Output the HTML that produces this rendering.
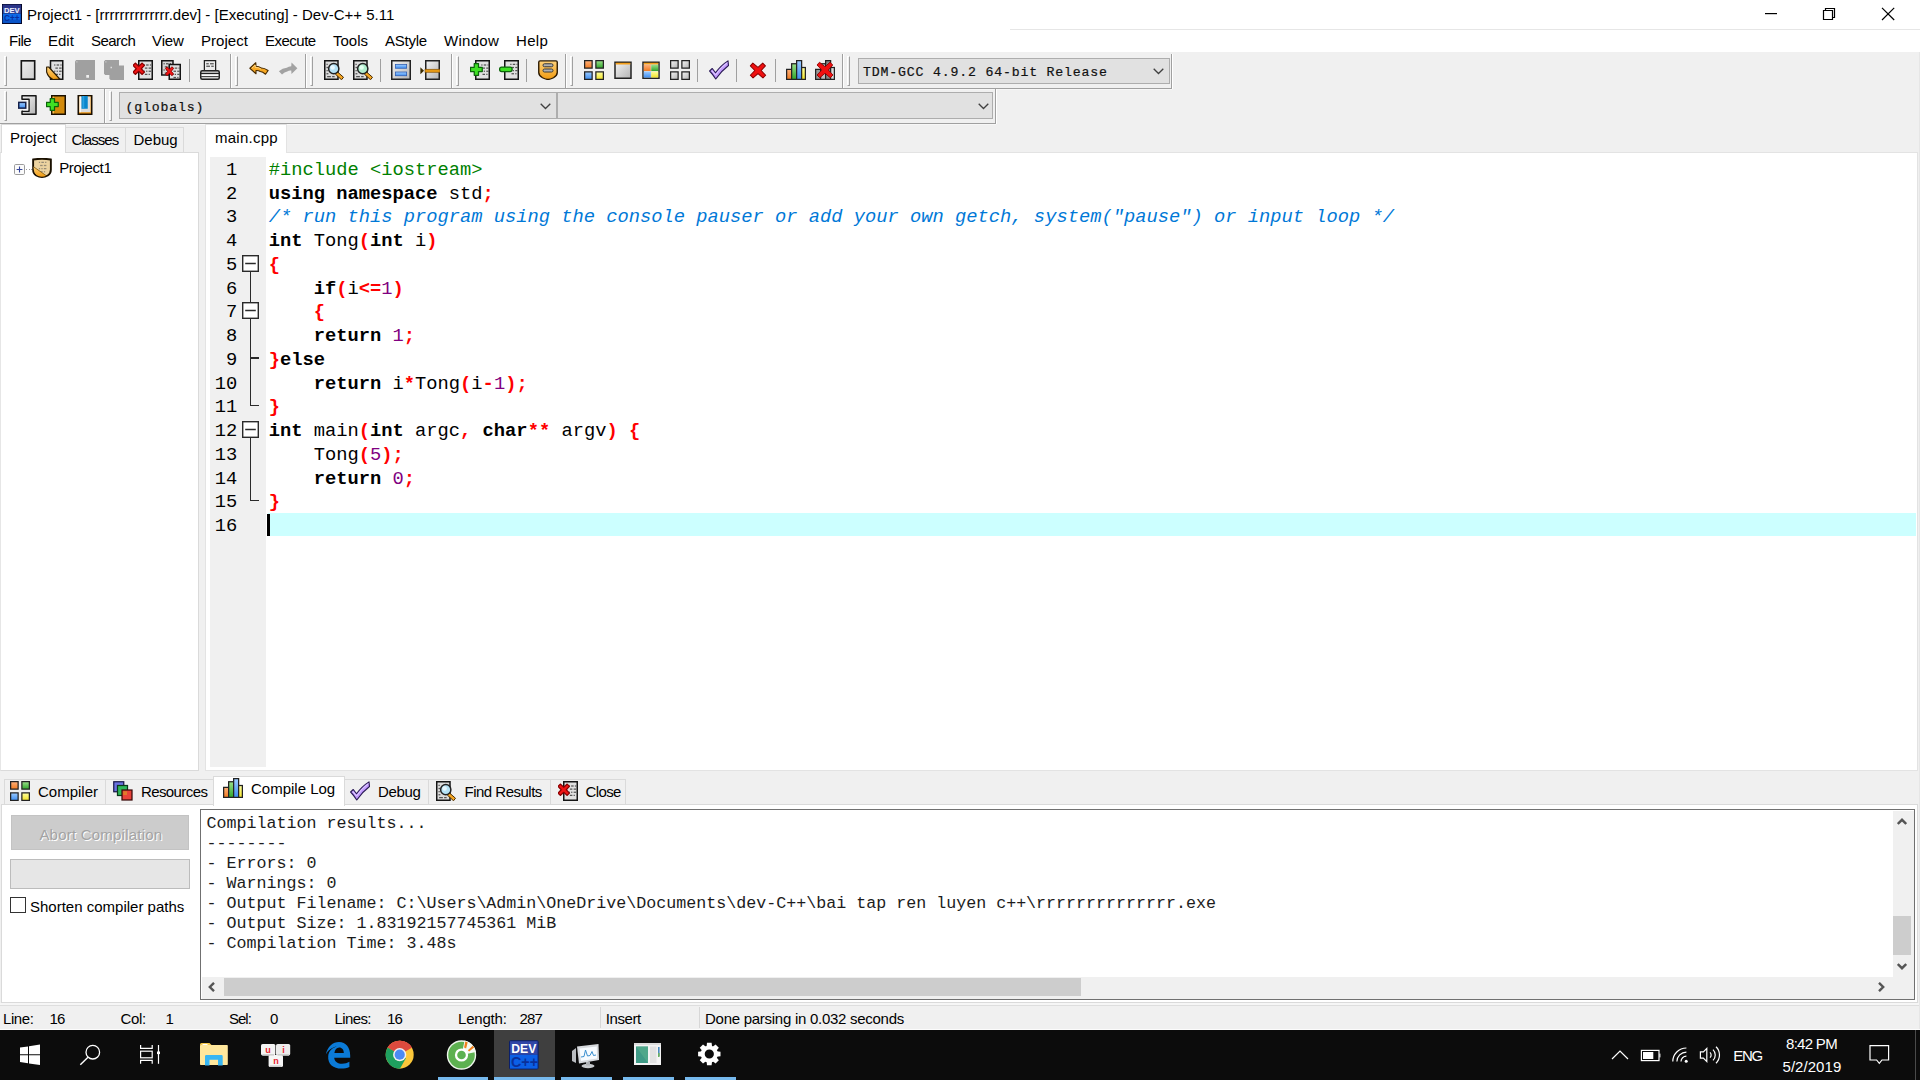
<!DOCTYPE html>
<html>
<head>
<meta charset="utf-8">
<title>Dev-C++</title>
<style>
*{box-sizing:border-box;margin:0;padding:0}
html,body{width:1920px;height:1080px;overflow:hidden;background:#f0f0f0;font-family:"Liberation Sans",sans-serif;font-size:15px;color:#000}
.abs{position:absolute}
.t{position:absolute;white-space:nowrap;line-height:1}
/* title + menu */
#title{left:0;top:0;width:1920px;height:30px;background:#fff}
#menu{left:0;top:30px;width:1920px;height:21.5px;background:#fff}
/* toolbars */
.tb{position:absolute;height:35px;border-right:1px solid #a0a0a0;border-bottom:1px solid #a0a0a0;box-shadow:1px 0 0 #fff,0 1px 0 #f7f7f7}
.grip{position:absolute;top:2px;width:3px;height:30px;border-left:1px solid #fff;border-right:1px solid #a0a0a0;border-top:1px solid #fff;border-bottom:1px solid #a0a0a0}
.sep{position:absolute;width:1.3px;height:22.5px;background:#a0a0a0}
.ic{position:absolute;width:20px;height:20px}
.combo{position:absolute;background:#e1e1e1;border:1px solid #adadad;font-family:"Liberation Mono",monospace;font-size:13.2px;letter-spacing:0.83px;color:#111;-webkit-text-stroke:0.2px #111}
/* code */
#code{font-family:"Liberation Mono",monospace;font-size:18.75px;line-height:23.75px;white-space:pre}
.ln{position:absolute;left:0;height:23.75px;white-space:pre}
.k{font-weight:bold}
.r{color:#ff0000;font-weight:bold}
.n{color:#800080}
.p{color:#008000}
.c{color:#0078d7;font-style:italic}
#log{font-family:"Liberation Mono",monospace;font-size:16.67px;line-height:20px;white-space:pre;color:#1c1c1c}
</style>
</head>
<body>
<!--ICONS1-->
<svg width="0" height="0" style="position:absolute">
<defs>
<linearGradient id="gpg" x1="0" y1="0" x2="1" y2="1"><stop offset="0" stop-color="#fbfbfb"/><stop offset="1" stop-color="#bdbdbd"/></linearGradient>
<linearGradient id="gpg2" x1="0" y1="0" x2="1" y2="1"><stop offset="0" stop-color="#ececec"/><stop offset="1" stop-color="#cfcfcf"/></linearGradient>
<linearGradient id="gor" x1="0" y1="0" x2="0" y2="1"><stop offset="0" stop-color="#ffd27a"/><stop offset="1" stop-color="#f09a10"/></linearGradient>
<linearGradient id="ggn" x1="0" y1="0" x2="0" y2="1"><stop offset="0" stop-color="#9be08a"/><stop offset="1" stop-color="#2fa52a"/></linearGradient>
<linearGradient id="gbl" x1="0" y1="0" x2="0" y2="1"><stop offset="0" stop-color="#9ccbff"/><stop offset="1" stop-color="#3f8ef0"/></linearGradient>
<linearGradient id="gyl" x1="0" y1="0" x2="0" y2="1"><stop offset="0" stop-color="#ffffa0"/><stop offset="1" stop-color="#f2e42a"/></linearGradient>
<linearGradient id="gog" x1="0" y1="0" x2="0" y2="1"><stop offset="0" stop-color="#ffb07a"/><stop offset="1" stop-color="#f07a20"/></linearGradient>
<linearGradient id="ggy" x1="0" y1="0" x2="1" y2="1"><stop offset="0" stop-color="#f4f4f4"/><stop offset="1" stop-color="#b4b4b4"/></linearGradient>
<g id="dots" fill="#555"><rect x="0" y="0" width="1" height="1"/><rect x="2" y="0" width="2" height="1"/><rect x="5" y="0" width="1" height="1"/><rect x="1" y="2.5" width="2" height="1"/><rect x="4" y="2.5" width="2" height="1"/><rect x="0" y="5" width="1" height="1"/><rect x="2" y="5" width="1" height="1"/><rect x="4" y="5" width="2" height="1"/><rect x="1" y="7.5" width="2" height="1"/><rect x="4" y="7.5" width="1" height="1"/></g>
<path id="redx" d="M1.7 0.2L4 2.3L6.3 0.2L7.8 1.7L5.7 4L7.8 6.3L6.3 7.8L4 5.7L1.7 7.8L0.2 6.3L2.3 4L0.2 1.7Z" fill="#f01414" stroke="#8a0000" stroke-width="0.8" stroke-linejoin="round"/>
<path id="gplus" d="M3.4 0.4H6.8V3.4H9.8V6.8H6.8V9.8H3.4V6.8H0.4V3.4H3.4Z" fill="#3fe024" stroke="#0b640a" stroke-width="1" stroke-linejoin="round"/>
<symbol id="i-new" viewBox="0 0 16 16"><rect x="2.65" y="0.65" width="10.7" height="14.7" fill="url(#gpg2)" stroke="#151515" stroke-width="1.3"/></symbol>
<symbol id="i-open" viewBox="0 0 16 16"><path d="M3.6 0.6H13.4V15.4H3.6Z" fill="#dedede" stroke="#151515" stroke-width="1.2"/><use href="#dots" x="6.5" y="3.5"/><path d="M0.5 5.6L2.2 5.6L11 15.2L5.6 15.6Q1.6 13.6 0.5 9.6Z" fill="url(#gor)" stroke="#2a1a00" stroke-width="0.9" stroke-linejoin="round"/></symbol>
<symbol id="i-save" viewBox="0 0 16 16"><path d="M1 0H16V16H1L0 15V1Z" fill="#a0a0a0"/><rect x="9" y="12" width="2.2" height="2.2" fill="#f0f0f0"/><rect x="1" y="1" width="1" height="1" fill="#c8c8c8"/></symbol>
<symbol id="i-saveall" viewBox="0 0 16 16"><path d="M1 0H12V4.3H16V16H5.3L4.3 15V12H1L0 11V1Z" fill="#a0a0a0"/><rect x="5.2" y="5.4" width="1.2" height="1.2" fill="#dcdcdc"/><rect x="1" y="1" width="1" height="1" fill="#c8c8c8"/></symbol>
<symbol id="i-close" viewBox="0 0 16 16"><rect x="4.6" y="0.6" width="10.8" height="14.8" fill="#e0e0e0" stroke="#151515" stroke-width="1.2"/><use href="#dots" x="8.5" y="3.5"/><g transform="translate(-0.2 2.2) scale(1.2)"><use href="#redx"/></g></symbol>
<symbol id="i-closeall" viewBox="0 0 16 16"><rect x="0.6" y="0.6" width="9" height="11.4" fill="#d4d4d4" stroke="#151515" stroke-width="1.2"/><use href="#dots" x="2" y="2.5"/><rect x="6.6" y="3.6" width="8.8" height="11.8" fill="#e0e0e0" stroke="#151515" stroke-width="1.2"/><use href="#dots" x="9" y="6"/><g transform="translate(3.4 5.2) scale(0.85 0.95)"><use href="#redx"/></g></symbol>
<symbol id="i-print" viewBox="0 0 16 16"><rect x="3.5" y="0.5" width="9" height="8" fill="#ececec" stroke="#222"/><rect x="5" y="2.5" width="2" height="1" fill="#555"/><rect x="8" y="2.5" width="3" height="1" fill="#555"/><rect x="5" y="4.5" width="3" height="1" fill="#555"/><rect x="9" y="4.5" width="2" height="1" fill="#555"/><rect x="0.6" y="8.6" width="14.8" height="6.8" rx="1.2" fill="#d0d0d0" stroke="#222" stroke-width="1.2"/><rect x="1.4" y="11.2" width="13.2" height="1.6" fill="#fafafa"/><rect x="0.6" y="10.3" width="14.8" height="1" fill="#222"/><rect x="0.6" y="12.8" width="14.8" height="0.8" fill="#444"/></symbol>
<symbol id="i-undo" viewBox="0 0 16 16"><g transform="translate(0 0.8)"><path d="M0.7 5.8L5.4 1.4L5.6 4.2Q8 4.4 9.6 5.6Q12 5.4 15.3 7.6L13.2 10.6Q11 8.6 9 8.4Q7.6 7.4 5.6 7.6L5.6 10.2Z" fill="#f7a823" stroke="#4a2c00" stroke-width="0.9" stroke-linejoin="round"/><path d="M2.2 5.8L5 3.2L5 5.2Q8 5 9.6 6.4" fill="none" stroke="#ffd98a" stroke-width="0.7"/></g></symbol>
<symbol id="i-redo" viewBox="0 0 16 16"><path transform="translate(0 0.8)" d="M15.5 5.8L10.8 1.2L10.6 4.2Q8.4 4.2 7 5.4Q3.6 5.6 0.7 8.2L3.2 10.8Q5.2 8.8 7.4 8.4Q8.8 7.4 10.6 7.6L10.8 10.4Z" fill="#a2a2a2"/></symbol>
<symbol id="i-find" viewBox="0 0 16 16"><rect x="0.6" y="0.6" width="10.6" height="14.8" fill="#dcdcdc" stroke="#151515" stroke-width="1.2"/><g fill="#555"><rect x="2" y="3" width="1" height="1"/><rect x="2" y="5.5" width="1.5" height="1"/><rect x="2" y="8" width="1" height="1"/><rect x="2" y="10.5" width="1.5" height="1"/><rect x="2.5" y="12.8" width="3" height="1"/><rect x="6.5" y="12.8" width="2" height="1"/></g><path d="M10.6 9.4L15.6 13.8L14 15.8L9 11.2Z" fill="#f5a623" stroke="#4a2c00" stroke-width="0.8" stroke-linejoin="round"/><circle cx="7.8" cy="6.9" r="4.1" fill="#b4e2f6" stroke="#222" stroke-width="1.2"/><circle cx="6.9" cy="6" r="1.8" fill="#e8f8ff"/></symbol>
<symbol id="i-replace" viewBox="0 0 16 16"><rect x="0.6" y="0.6" width="10.6" height="14.8" fill="#dcdcdc" stroke="#151515" stroke-width="1.2"/><g fill="#555"><rect x="2" y="3" width="1" height="1"/><rect x="2" y="5.5" width="1.5" height="1"/><rect x="2" y="8" width="1" height="1"/><rect x="2" y="10.5" width="1.5" height="1"/><rect x="2.5" y="12.8" width="3" height="1"/><rect x="6.5" y="12.8" width="2" height="1"/></g><path d="M10.6 9.4L15.6 13.8L14 15.8L9 11.2Z" fill="#f5a623" stroke="#4a2c00" stroke-width="0.8" stroke-linejoin="round"/><circle cx="7.8" cy="6.9" r="4.1" fill="#aeeccc" stroke="#222" stroke-width="1.2"/><circle cx="6.9" cy="6" r="1.8" fill="#e2fff0"/></symbol>
<symbol id="i-gotofunc" viewBox="0 0 16 16"><rect x="0.6" y="0.6" width="14.8" height="14.8" fill="url(#ggy)" stroke="#222" stroke-width="1.2"/><rect x="3.5" y="3.6" width="9" height="3" fill="url(#gbl)" stroke="#2a5ab0" stroke-width="0.6"/><rect x="3.5" y="9.6" width="9" height="3" fill="url(#gbl)" stroke="#2a5ab0" stroke-width="0.6"/></symbol>
<symbol id="i-gotoline" viewBox="0 0 16 16"><rect x="4.6" y="0.6" width="10.8" height="14.8" fill="url(#ggy)" stroke="#222" stroke-width="1.2"/><rect x="4" y="7.4" width="12" height="2.4" fill="#e79a14" stroke="#7a4a00" stroke-width="0.5"/><path d="M0.3 5.8L3.2 8.6L0.3 11.4Z" fill="#3a2a00"/></symbol>
<symbol id="i-addfile" viewBox="0 0 16 16"><rect x="4.6" y="0.6" width="10.8" height="14.8" fill="#e0e0e0" stroke="#151515" stroke-width="1.2"/><use href="#dots" x="9" y="3.5"/><use href="#gplus" x="0" y="2.4"/></symbol>
<symbol id="i-remfile" viewBox="0 0 16 16"><rect x="4.6" y="0.6" width="10.8" height="14.8" fill="#e0e0e0" stroke="#151515" stroke-width="1.2"/><use href="#dots" x="9" y="3"/><rect x="0.5" y="5.6" width="10" height="3.6" rx="1.6" fill="#3fe024" stroke="#0b640a" stroke-width="1"/></symbol>
<symbol id="i-projopt" viewBox="0 0 16 16"><path d="M1.6 0.7H14.4Q15.4 0.7 15.4 1.7V10Q15.4 12.4 12.4 14.2Q10 15.5 8 15.5Q6 15.5 3.6 14.2Q0.6 12.4 0.6 10V1.7Q0.6 0.7 1.6 0.7Z" fill="url(#gor)" stroke="#2a1800" stroke-width="1.1"/><rect x="4" y="3" width="8" height="2.4" rx="1.2" fill="#b0b0b0" stroke="#3a3a3a" stroke-width="0.8"/><rect x="4" y="7.2" width="8" height="2.4" rx="1.2" fill="#b0b0b0" stroke="#3a3a3a" stroke-width="0.8"/></symbol>
<symbol id="i-compile" viewBox="0 0 16 16"><rect x="0.5" y="0.5" width="6" height="6" fill="url(#gog)" stroke="#222"/><rect x="9.5" y="0.5" width="6" height="6" fill="url(#ggn)" stroke="#222"/><rect x="0.5" y="9.5" width="6" height="6" fill="url(#gbl)" stroke="#222"/><rect x="9.5" y="9.5" width="6" height="6" fill="url(#gyl)" stroke="#222"/></symbol>
<symbol id="i-run" viewBox="0 0 16 16"><rect x="1.6" y="1.8" width="12.8" height="12.8" fill="url(#ggy)" stroke="#222" stroke-width="1.2"/><rect x="2.2" y="2.2" width="11.6" height="1.4" fill="#f5a01a"/></symbol>
<symbol id="i-comprun" viewBox="0 0 16 16"><rect x="1.6" y="1.8" width="12.8" height="12.8" fill="#ddd" stroke="#222" stroke-width="1.2"/><rect x="2.2" y="2.2" width="11.6" height="1.4" fill="#f5a01a"/><rect x="2.2" y="3.8" width="5.6" height="5" fill="url(#gog)"/><rect x="8.2" y="3.8" width="5.6" height="5" fill="url(#ggn)"/><rect x="2.2" y="9.2" width="5.6" height="4.8" fill="url(#gbl)"/><rect x="8.2" y="9.2" width="5.6" height="4.8" fill="url(#gyl)"/></symbol>
<symbol id="i-rebuild" viewBox="0 0 16 16"><rect x="0.5" y="0.5" width="6" height="6" fill="url(#ggy)" stroke="#222"/><rect x="9.5" y="0.5" width="6" height="6" fill="url(#ggy)" stroke="#222"/><rect x="0.5" y="9.5" width="6" height="6" fill="url(#ggy)" stroke="#222"/><rect x="9.5" y="9.5" width="6" height="6" fill="url(#ggy)" stroke="#222"/></symbol>
<symbol id="i-check" viewBox="0 0 16 16"><path d="M0.5 8.8L2.6 6.8L5.2 10.2Q9.6 4.2 15.2 0.7L15.6 4.4Q9.8 8.8 5.4 15.2Q3.2 11.6 0.5 8.8Z" fill="#c39bff" stroke="#2a1a55" stroke-width="0.9" stroke-linejoin="round"/><path d="M2.4 8.6L5.2 12Q9.6 5.6 14.6 2.2" fill="none" stroke="#e4d2ff" stroke-width="0.8"/></symbol>
<symbol id="i-stop" viewBox="0 0 16 16"><g transform="translate(0.8 1.4) scale(0.9)"><path d="M3.4 1.2L8 5L12.2 1.2L14.6 3.6L10.8 7.8L14.8 12L12.4 14.4L8 10.6L3.6 14.4L1.2 12L5.2 7.8L1.2 3.6Z" fill="#f01010" stroke="#8a0000" stroke-width="0.9" stroke-linejoin="round"/></g></symbol>
<symbol id="i-chart" viewBox="0 0 16 16"><rect x="0.5" y="7.5" width="4" height="8" fill="url(#gog)" stroke="#222"/><rect x="4.5" y="3" width="4" height="12.5" fill="url(#ggn)" stroke="#222"/><rect x="8.5" y="0.5" width="4" height="15" fill="url(#gbl)" stroke="#222"/><rect x="12.5" y="6" width="3" height="9.5" fill="url(#gyl)" stroke="#222"/></symbol>
<symbol id="i-delprof" viewBox="0 0 16 16"><rect x="0.5" y="7.5" width="4" height="8" fill="#999" stroke="#222"/><rect x="4.5" y="3" width="4" height="12.5" fill="#bbb" stroke="#222"/><rect x="8.5" y="0.5" width="4" height="15" fill="#888" stroke="#222"/><rect x="12.5" y="6" width="3" height="9.5" fill="#ddd" stroke="#222"/><path d="M3.6 1.8L8 5.4L12 1.8L14.2 4L10.6 8L14.4 12L12.2 14.2L8 10.6L3.8 14.2L1.6 12L5.4 8L1.6 4Z" fill="#f01010" stroke="#8a0000" stroke-width="0.7" stroke-linejoin="round"/></symbol>
<symbol id="i-newwin" viewBox="0 0 16 16"><path d="M3.2 0.6H14.4V15.4H3.2V12.9H8.8V3.4H3.2Z" fill="url(#ggy)" stroke="#151515" stroke-width="1.2" stroke-linejoin="round"/><rect x="4" y="4" width="4.2" height="8.4" fill="#f6f6f6"/><rect x="0.6" y="5.9" width="5.6" height="4.6" fill="url(#gbl)" stroke="#15204a" stroke-width="1.2"/></symbol>
<symbol id="i-door" viewBox="0 0 16 16"><rect x="4.6" y="0.6" width="10.8" height="14.8" fill="#d28a0c" stroke="#1a0f00" stroke-width="1.2"/><rect x="5.3" y="1.3" width="1" height="13.4" fill="#f0c060"/><use href="#gplus" x="0" y="2.4"/></symbol>
<symbol id="i-book" viewBox="0 0 16 16"><rect x="2.6" y="0.6" width="10.8" height="14.8" fill="#e8900c" stroke="#1a0f00" stroke-width="1.2"/><rect x="3.6" y="1.2" width="8.8" height="12.6" fill="#dcdcdc"/><rect x="3.6" y="1.2" width="1.2" height="12.6" fill="#f8f8f8"/><rect x="5.2" y="0.8" width="5" height="10.2" fill="#0a86cc"/><rect x="6" y="0.8" width="1.4" height="10.2" fill="#2aa0e0"/></symbol>
<symbol id="i-res" viewBox="0 0 16 16"><rect x="0.6" y="0.6" width="8" height="8" fill="#6a72e0" stroke="#1a1a4a" stroke-width="1"/><rect x="3.6" y="3.6" width="8" height="8" fill="#2fb85a" stroke="#0a3a1a" stroke-width="1"/><rect x="7.2" y="7.2" width="8" height="8" fill="#e8423a" stroke="#3a0a0a" stroke-width="1"/><rect x="8.2" y="8.2" width="3" height="3" fill="#e07a2a"/></symbol>
<symbol id="i-projicon" viewBox="0 0 16 16"><path d="M0.9 1.2Q8 0 15.1 1.2V9.4Q15.1 12.4 12.6 14Q10.4 15.2 8 15.2Q5.6 15.2 3.4 14Q0.9 12.4 0.9 9.4Z" fill="#ecd3a0" stroke="#1a1000" stroke-width="1.5"/><use href="#dots" x="5.5" y="3" opacity="0.55"/><path d="M1.2 7L11.5 14.2Q8 15.6 5 14.4Q1.2 12.5 1.2 7Z" fill="url(#gor)"/><path d="M1.2 7L11.5 14.2" stroke="#7a5200" stroke-width="0.6"/></symbol>
</defs>
</svg>
<!--/ICONS1-->
<!-- TITLE BAR -->
<div id="title" class="abs">
<svg class="abs" style="left:2px;top:4px" width="20" height="20" viewBox="0 0 20 20"><rect x="0" y="0" width="20" height="20" fill="#05082a"/><rect x="0.8" y="0.8" width="18" height="8.8" fill="#3a4aa0"/><rect x="0.8" y="0.8" width="18" height="3" fill="#2a3488"/><rect x="0.8" y="9.6" width="18" height="9.2" fill="#0d6ae8"/><rect x="0.8" y="15.5" width="18" height="3.3" fill="#0a54c8"/><text x="9.8" y="8.8" font-family="Liberation Sans" font-weight="bold" font-size="7.6" fill="#f0f2ff" text-anchor="middle">DEV</text><text x="9.8" y="16.6" font-family="Liberation Sans" font-weight="bold" font-size="8.2" fill="#0a2f9c" text-anchor="middle">C++</text></svg>
<div class="t" style="left:27px;top:7.3px">Project1 - [rrrrrrrrrrrrrr.dev] - [Executing] - Dev-C++ 5.11</div>
<div class="abs" style="left:1010px;top:29px;width:910px;height:1px;background:#e6e6e6"></div>
<svg class="abs" style="left:1750px;top:0" width="170" height="30" viewBox="0 0 170 30"><g stroke="#000" stroke-width="1.2" fill="none"><path d="M15 13.6H27"/><path d="M73.5 10.5h9v9h-9z"/><path d="M75.5 10.5v-2h9v9h-2"/><path d="M132 7.8l12.2 12.2M144.2 7.8L132 20"/></g></svg>
</div>
<!-- MENU BAR -->
<div id="menu" class="abs">
<div class="t" style="left:9px;top:3.3px;letter-spacing:-0.5px">File</div>
<div class="t" style="left:48px;top:3.3px;letter-spacing:0px">Edit</div>
<div class="t" style="left:91px;top:3.3px;letter-spacing:-0.55px">Search</div>
<div class="t" style="left:152px;top:3.3px;letter-spacing:-0.1px">View</div>
<div class="t" style="left:201px;top:3.3px;letter-spacing:0.05px">Project</div>
<div class="t" style="left:265px;top:3.3px;letter-spacing:-0.5px">Execute</div>
<div class="t" style="left:333px;top:3.3px;letter-spacing:0px">Tools</div>
<div class="t" style="left:385px;top:3.3px;letter-spacing:-0.25px">AStyle</div>
<div class="t" style="left:444px;top:3.3px;letter-spacing:0.3px">Window</div>
<div class="t" style="left:516px;top:3.3px;letter-spacing:0.3px">Help</div>
</div>
<!-- TOOLBARS -->
<div id="toolbars">
<div class="tb" style="left:0px;top:54px;width:231px"></div>
<div class="grip" style="left:4px;top:56px"></div>
<div class="tb" style="left:231px;top:54px;width:75px"></div>
<div class="grip" style="left:235px;top:56px"></div>
<div class="tb" style="left:306px;top:54px;width:146px"></div>
<div class="grip" style="left:310px;top:56px"></div>
<div class="tb" style="left:452px;top:54px;width:114px"></div>
<div class="grip" style="left:456px;top:56px"></div>
<div class="tb" style="left:566px;top:54px;width:277px"></div>
<div class="grip" style="left:570px;top:56px"></div>
<div class="tb" style="left:843px;top:54px;width:329px"></div>
<div class="grip" style="left:847px;top:56px"></div>
<div class="tb" style="left:0px;top:89px;width:104.5px"></div>
<div class="grip" style="left:4px;top:91px"></div>
<div class="tb" style="left:104.5px;top:89px;width:891.5px"></div>
<div class="grip" style="left:108.5px;top:91px"></div>
<svg class="ic" style="left:17.5px;top:60px" viewBox="0 0 16 16"><use href="#i-new"/></svg>
<svg class="ic" style="left:46.25px;top:60px" viewBox="0 0 16 16"><use href="#i-open"/></svg>
<svg class="ic" style="left:75px;top:60px" viewBox="0 0 16 16"><use href="#i-save"/></svg>
<svg class="ic" style="left:103.75px;top:60px" viewBox="0 0 16 16"><use href="#i-saveall"/></svg>
<svg class="ic" style="left:132.5px;top:60px" viewBox="0 0 16 16"><use href="#i-close"/></svg>
<svg class="ic" style="left:161.25px;top:60px" viewBox="0 0 16 16"><use href="#i-closeall"/></svg>
<svg class="ic" style="left:200px;top:60px" viewBox="0 0 16 16"><use href="#i-print"/></svg>
<svg class="ic" style="left:248.75px;top:60px" viewBox="0 0 16 16"><use href="#i-undo"/></svg>
<svg class="ic" style="left:277.5px;top:60px" viewBox="0 0 16 16"><use href="#i-redo"/></svg>
<svg class="ic" style="left:323.75px;top:60px" viewBox="0 0 16 16"><use href="#i-find"/></svg>
<svg class="ic" style="left:352.5px;top:60px" viewBox="0 0 16 16"><use href="#i-replace"/></svg>
<svg class="ic" style="left:391.25px;top:60px" viewBox="0 0 16 16"><use href="#i-gotofunc"/></svg>
<svg class="ic" style="left:420px;top:60px" viewBox="0 0 16 16"><use href="#i-gotoline"/></svg>
<svg class="ic" style="left:470px;top:60px" viewBox="0 0 16 16"><use href="#i-addfile"/></svg>
<svg class="ic" style="left:498.75px;top:60px" viewBox="0 0 16 16"><use href="#i-remfile"/></svg>
<svg class="ic" style="left:537.5px;top:60px" viewBox="0 0 16 16"><use href="#i-projopt"/></svg>
<svg class="ic" style="left:583.75px;top:60px" viewBox="0 0 16 16"><use href="#i-compile"/></svg>
<svg class="ic" style="left:612.5px;top:60px" viewBox="0 0 16 16"><use href="#i-run"/></svg>
<svg class="ic" style="left:641.25px;top:60px" viewBox="0 0 16 16"><use href="#i-comprun"/></svg>
<svg class="ic" style="left:670px;top:60px" viewBox="0 0 16 16"><use href="#i-rebuild"/></svg>
<svg class="ic" style="left:708.75px;top:60px" viewBox="0 0 16 16"><use href="#i-check"/></svg>
<svg class="ic" style="left:747.5px;top:60px" viewBox="0 0 16 16"><use href="#i-stop"/></svg>
<svg class="ic" style="left:786.25px;top:60px" viewBox="0 0 16 16"><use href="#i-chart"/></svg>
<svg class="ic" style="left:815px;top:60px" viewBox="0 0 16 16"><use href="#i-delprof"/></svg>
<div class="sep" style="left:188.6px;top:59px"></div>
<div class="sep" style="left:379.6px;top:59px"></div>
<div class="sep" style="left:526.1px;top:59px"></div>
<div class="sep" style="left:697.1px;top:59px"></div>
<div class="sep" style="left:736.1px;top:59px"></div>
<div class="sep" style="left:774.6px;top:59px"></div>
<svg class="ic" style="left:17.5px;top:95px" viewBox="0 0 16 16"><use href="#i-newwin"/></svg>
<svg class="ic" style="left:46.25px;top:95px" viewBox="0 0 16 16"><use href="#i-door"/></svg>
<svg class="ic" style="left:75px;top:95px" viewBox="0 0 16 16"><use href="#i-book"/></svg>
<div class="combo" style="left:857.5px;top:57.5px;width:312px;height:26.5px"><div class="t" style="left:4.5px;top:7.6px">TDM-GCC 4.9.2 64-bit Release</div><svg class="abs" style="right:4.5px;top:9.5px" width="11" height="7" viewBox="0 0 11 7"><path d="M0.7 0.7L5.5 5.5L10.3 0.7" stroke="#404040" stroke-width="1.3" fill="none"/></svg></div>
<div class="combo" style="left:118.5px;top:91.5px;width:438px;height:27px"><div class="t" style="left:6px;top:8.2px">(globals)</div><svg class="abs" style="right:4.5px;top:10.6px" width="11" height="7" viewBox="0 0 11 7"><path d="M0.7 0.7L5.5 5.5L10.3 0.7" stroke="#404040" stroke-width="1.3" fill="none"/></svg></div>
<div class="combo" style="left:556.5px;top:91.5px;width:436.7px;height:27px"><svg class="abs" style="right:3.5px;top:10.6px" width="11" height="7" viewBox="0 0 11 7"><path d="M0.7 0.7L5.5 5.5L10.3 0.7" stroke="#404040" stroke-width="1.3" fill="none"/></svg></div>
</div>
<!-- LEFT PANEL -->
<div id="left">
<div class="abs" style="left:0;top:151.5px;width:198.5px;height:619px;background:#fff;border:1px solid #dadada;border-left-color:#e6e6e6"></div>
<div class="abs" style="left:65px;top:126.5px;width:60.5px;height:26px;border:1px solid #dadada;border-bottom:none"></div>
<div class="abs" style="left:124.5px;top:126.5px;width:59px;height:26px;border:1px solid #dadada;border-bottom:none"></div>
<div class="abs" style="left:0.5px;top:124px;width:65px;height:29px;background:#fff;border:1px solid #dadada;border-bottom:none"></div>
<div class="t" style="left:10px;top:129.8px">Project</div>
<div class="t" style="left:71.5px;top:132.3px;letter-spacing:-0.95px">Classes</div>
<div class="t" style="left:133.5px;top:132.3px">Debug</div>
<svg class="abs" style="left:13.8px;top:164px" width="11" height="11" viewBox="0 0 11 11"><rect x="0.5" y="0.5" width="10" height="10" rx="1.2" fill="#fbfbfb" stroke="#9c9c9c" stroke-width="1"/><path d="M2.6 5.5H8.4M5.5 2.6V8.4" stroke="#34449a" stroke-width="1.1"/></svg>
<div class="abs" style="left:26px;top:169px;width:6px;height:1px;background:repeating-linear-gradient(90deg,#999 0 1px,transparent 1px 2.5px)"></div>
<svg class="abs" style="left:32px;top:157.5px" width="20" height="20" viewBox="0 0 16 16"><use href="#i-projicon"/></svg>
<div class="t" style="left:59.2px;top:159.8px;letter-spacing:-0.35px">Project1</div>
</div>
<!-- EDITOR -->
<div id="editor">
<div class="abs" style="left:205px;top:151.5px;width:1712.5px;height:619px;background:#fff;border:1px solid #e3e3e3"></div>
<div class="abs" style="left:205px;top:124px;width:81.5px;height:29px;background:#fff;border:1px solid #e3e3e3;border-bottom:none"></div>
<div class="t" style="left:215px;top:129.8px;letter-spacing:0.25px">main.cpp</div>
<div class="abs" style="left:210px;top:157px;width:56px;height:609.7px;background:#f0f0f0"></div>
<div class="abs" style="left:267.5px;top:512.5px;width:1648.5px;height:23.75px;background:#ccffff"></div>
<div class="abs" style="left:267px;top:513.5px;width:2.5px;height:22px;background:#000"></div>
<div id="code" class="abs" style="left:0;top:2.5px">
<div class="ln" style="top:156.25px;left:203.3px;width:34px;text-align:right">1</div>
<div class="ln" style="top:156.25px;left:268.75px"><span class="p">#include &lt;iostream&gt;</span></div>
<div class="ln" style="top:180px;left:203.3px;width:34px;text-align:right">2</div>
<div class="ln" style="top:180px;left:268.75px"><span class="k">using namespace</span> std<span class="r">;</span></div>
<div class="ln" style="top:203.75px;left:203.3px;width:34px;text-align:right">3</div>
<div class="ln" style="top:203.75px;left:268.75px"><span class="c">/* run this program using the console pauser or add your own getch, system("pause") or input loop */</span></div>
<div class="ln" style="top:227.5px;left:203.3px;width:34px;text-align:right">4</div>
<div class="ln" style="top:227.5px;left:268.75px"><span class="k">int</span> Tong<span class="r">(</span><span class="k">int</span> i<span class="r">)</span></div>
<div class="ln" style="top:251.25px;left:203.3px;width:34px;text-align:right">5</div>
<div class="ln" style="top:251.25px;left:268.75px"><span class="r">{</span></div>
<div class="ln" style="top:275px;left:203.3px;width:34px;text-align:right">6</div>
<div class="ln" style="top:275px;left:268.75px">    <span class="k">if</span><span class="r">(</span>i<span class="r">&lt;=</span><span class="n">1</span><span class="r">)</span></div>
<div class="ln" style="top:298.75px;left:203.3px;width:34px;text-align:right">7</div>
<div class="ln" style="top:298.75px;left:268.75px">    <span class="r">{</span></div>
<div class="ln" style="top:322.5px;left:203.3px;width:34px;text-align:right">8</div>
<div class="ln" style="top:322.5px;left:268.75px">    <span class="k">return</span> <span class="n">1</span><span class="r">;</span></div>
<div class="ln" style="top:346.25px;left:203.3px;width:34px;text-align:right">9</div>
<div class="ln" style="top:346.25px;left:268.75px"><span class="r">}</span><span class="k">else</span></div>
<div class="ln" style="top:370px;left:203.3px;width:34px;text-align:right">10</div>
<div class="ln" style="top:370px;left:268.75px">    <span class="k">return</span> i<span class="r">*</span>Tong<span class="r">(</span>i<span class="r">-</span><span class="n">1</span><span class="r">);</span></div>
<div class="ln" style="top:393.75px;left:203.3px;width:34px;text-align:right">11</div>
<div class="ln" style="top:393.75px;left:268.75px"><span class="r">}</span></div>
<div class="ln" style="top:417.5px;left:203.3px;width:34px;text-align:right">12</div>
<div class="ln" style="top:417.5px;left:268.75px"><span class="k">int</span> main<span class="r">(</span><span class="k">int</span> argc<span class="r">,</span> <span class="k">char</span><span class="r">**</span> argv<span class="r">)</span> <span class="r">{</span></div>
<div class="ln" style="top:441.25px;left:203.3px;width:34px;text-align:right">13</div>
<div class="ln" style="top:441.25px;left:268.75px">    Tong<span class="r">(</span><span class="n">5</span><span class="r">);</span></div>
<div class="ln" style="top:465px;left:203.3px;width:34px;text-align:right">14</div>
<div class="ln" style="top:465px;left:268.75px">    <span class="k">return</span> <span class="n">0</span><span class="r">;</span></div>
<div class="ln" style="top:488.75px;left:203.3px;width:34px;text-align:right">15</div>
<div class="ln" style="top:488.75px;left:268.75px"><span class="r">}</span></div>
<div class="ln" style="top:512.5px;left:203.3px;width:34px;text-align:right">16</div>
</div>
<div class="abs" style="left:250px;top:271.125px;width:1.3px;height:134.5px;background:#2a2a2a"></div>
<svg class="abs" style="left:242px;top:254.625px" width="17" height="17" viewBox="0 0 17 17"><rect x="0.65" y="0.65" width="15.7" height="15.7" fill="#fff" stroke="#2a2a2a" stroke-width="1.5"/><path d="M3.2 8.5H13.8" stroke="#2a2a2a" stroke-width="1.5"/></svg>
<svg class="abs" style="left:242px;top:302.125px" width="17" height="17" viewBox="0 0 17 17"><rect x="0.65" y="0.65" width="15.7" height="15.7" fill="#fff" stroke="#2a2a2a" stroke-width="1.5"/><path d="M3.2 8.5H13.8" stroke="#2a2a2a" stroke-width="1.5"/></svg>
<div class="abs" style="left:250px;top:357.475px;width:9px;height:1.3px;background:#2a2a2a"></div>
<div class="abs" style="left:250px;top:404.975px;width:9px;height:1.3px;background:#2a2a2a"></div>
<div class="abs" style="left:250px;top:437.375px;width:1.3px;height:63.25px;background:#2a2a2a"></div>
<svg class="abs" style="left:242px;top:420.875px" width="17" height="17" viewBox="0 0 17 17"><rect x="0.65" y="0.65" width="15.7" height="15.7" fill="#fff" stroke="#2a2a2a" stroke-width="1.5"/><path d="M3.2 8.5H13.8" stroke="#2a2a2a" stroke-width="1.5"/></svg>
<div class="abs" style="left:250px;top:499.975px;width:9px;height:1.3px;background:#2a2a2a"></div>
</div>
<!-- BOTTOM PANEL -->
<div id="bottom">
<div class="abs" style="left:0.5px;top:804px;width:1917px;height:199px;background:#fff;border:1px solid #dadada"></div>
<div class="abs" style="left:0;top:1003px;width:1920px;height:2px;background:#f6f6f6"></div>
<div class="abs" style="left:0;top:1005px;width:1920px;height:1px;background:#dedede"></div>
<div class="abs" style="left:0;top:1029px;width:1920px;height:1px;background:#fcfcfc"></div>
<div class="abs" style="left:3.75px;top:778.9px;width:102.25px;height:26.1px;border:1px solid #dadada;border-bottom:none"></div>
<div class="abs" style="left:105px;top:778.9px;width:109.5px;height:26.1px;border:1px solid #dadada;border-bottom:none"></div>
<div class="abs" style="left:344px;top:778.9px;width:85px;height:26.1px;border:1px solid #dadada;border-bottom:none"></div>
<div class="abs" style="left:428px;top:778.9px;width:122.5px;height:26.1px;border:1px solid #dadada;border-bottom:none"></div>
<div class="abs" style="left:549.5px;top:778.9px;width:76.5px;height:26.1px;border:1px solid #dadada;border-bottom:none"></div>
<div class="abs" style="left:213px;top:776px;width:132px;height:29.5px;background:#fff;border:1px solid #dadada;border-bottom:none"></div>
<svg class="ic" style="left:10px;top:781px" viewBox="0 0 16 16"><use href="#i-compile"/></svg>
<div class="t" style="left:38px;top:784.1px;">Compiler</div>
<svg class="ic" style="left:112.8px;top:781px" viewBox="0 0 16 16"><use href="#i-res"/></svg>
<div class="t" style="left:141px;top:784.1px;letter-spacing:-0.6px">Resources</div>
<svg class="ic" style="left:222.5px;top:777.8px" viewBox="0 0 16 16"><use href="#i-chart"/></svg>
<div class="t" style="left:251px;top:781.4px;">Compile Log</div>
<svg class="ic" style="left:350px;top:781px" viewBox="0 0 16 16"><use href="#i-check"/></svg>
<div class="t" style="left:378px;top:784.1px;letter-spacing:-0.35px">Debug</div>
<svg class="ic" style="left:436px;top:781px" viewBox="0 0 16 16"><use href="#i-find"/></svg>
<div class="t" style="left:464.5px;top:784.1px;letter-spacing:-0.5px">Find Results</div>
<svg class="ic" style="left:557.5px;top:781px" viewBox="0 0 16 16"><use href="#i-close"/></svg>
<div class="t" style="left:585.5px;top:784.1px;letter-spacing:-0.6px">Close</div>
<div class="abs" style="left:11.25px;top:815px;width:177.5px;height:35px;background:#cccccc;border:1px solid #c3c3c3"></div>
<div class="t" style="left:39.4px;top:826.7px;color:#a3a3a3;text-shadow:1px 1px 0 #fff;letter-spacing:0.22px">Abort Compilation</div>
<div class="abs" style="left:10px;top:859px;width:180px;height:29.5px;background:#e6e6e6;border:1px solid #bcbcbc"></div>
<div class="abs" style="left:9.9px;top:897.2px;width:16px;height:16px;background:#fff;border:1.3px solid #333"></div>
<div class="t" style="left:30px;top:899px;">Shorten compiler paths</div>
<div class="abs" style="left:200px;top:809px;width:1714.6px;height:191px;background:#fff;border:1.3px solid #707070"></div>
<div id="log" class="abs" style="left:206.5px;top:814px">Compilation results...
--------
- Errors: 0
- Warnings: 0
- Output Filename: C:\Users\Admin\OneDrive\Documents\dev-C++\bai tap ren luyen c++\rrrrrrrrrrrrrr.exe
- Output Size: 1.83192157745361 MiB
- Compilation Time: 3.48s</div>
<div class="abs" style="left:1892.5px;top:810.5px;width:21px;height:166.5px;background:#f0f0f0"></div>
<div class="abs" style="left:201.5px;top:977px;width:1712px;height:21.5px;background:#f0f0f0"></div>
<div class="abs" style="left:1893px;top:916px;width:18px;height:39px;background:#cdcdcd"></div>
<div class="abs" style="left:224px;top:977.8px;width:857px;height:18px;background:#cdcdcd"></div>
<svg class="abs" style="left:1896.5px;top:817px" width="10" height="10" viewBox="0 0 10 10"><path d="M0.8 7L5 2.8L9.2 7" stroke="#555" stroke-width="2.4" fill="none"/></svg>
<svg class="abs" style="left:1896.5px;top:961px" width="10" height="10" viewBox="0 0 10 10"><path d="M0.8 3L5 7.2L9.2 3" stroke="#555" stroke-width="2.4" fill="none"/></svg>
<svg class="abs" style="left:206.5px;top:982px" width="10" height="10" viewBox="0 0 10 10"><path d="M7 0.8L2.8 5L7 9.2" stroke="#555" stroke-width="2.4" fill="none"/></svg>
<svg class="abs" style="left:1876px;top:982px" width="10" height="10" viewBox="0 0 10 10"><path d="M3 0.8L7.2 5L3 9.2" stroke="#555" stroke-width="2.4" fill="none"/></svg>
</div>
<div class="abs" style="left:1918.6px;top:52px;width:1.4px;height:977px;background:#e6e6e6"></div>
<!-- STATUS BAR -->
<div id="status">
<div class="t" style="left:3px;top:1011.05px;letter-spacing:-0.4px">Line:</div>
<div class="t" style="left:49.5px;top:1011.05px;letter-spacing:-0.8px">16</div>
<div class="t" style="left:120.5px;top:1011.05px;letter-spacing:-0.3px">Col:</div>
<div class="t" style="left:165.5px;top:1011.05px;letter-spacing:0px">1</div>
<div class="t" style="left:229px;top:1011.05px;letter-spacing:-1px">Sel:</div>
<div class="t" style="left:270px;top:1011.05px;letter-spacing:0px">0</div>
<div class="t" style="left:334.5px;top:1011.05px;letter-spacing:-0.6px">Lines:</div>
<div class="t" style="left:387px;top:1011.05px;letter-spacing:-0.8px">16</div>
<div class="t" style="left:458px;top:1011.05px;letter-spacing:-0.2px">Length:</div>
<div class="t" style="left:519.4px;top:1011.05px;letter-spacing:-0.8px">287</div>
<div class="t" style="left:605.7px;top:1011.05px;letter-spacing:-0.4px">Insert</div>
<div class="t" style="left:705px;top:1011.05px;letter-spacing:-0.27px">Done parsing in 0.032 seconds</div>
<div class="abs" style="left:599.5px;top:1007px;width:1px;height:21px;background:#d7d7d7"></div>
<div class="abs" style="left:698.5px;top:1007px;width:1px;height:21px;background:#d7d7d7"></div>
</div>
<!-- TASKBAR -->
<div id="taskbar" class="abs" style="left:0;top:1030px;width:1920px;height:50px;background:#0c0c0c;color:#fff">
<div class="abs" style="left:494px;top:0;width:61px;height:50px;background:#3f3f3f"></div>
<div class="abs" style="left:437.5px;top:47px;width:50.5px;height:3px;background:#76b9ed"></div>
<div class="abs" style="left:494px;top:47px;width:61px;height:3px;background:#76b9ed"></div>
<div class="abs" style="left:561px;top:47px;width:51px;height:3px;background:#76b9ed"></div>
<div class="abs" style="left:623px;top:47px;width:51px;height:3px;background:#76b9ed"></div>
<div class="abs" style="left:685px;top:47px;width:51px;height:3px;background:#76b9ed"></div>
<svg class="abs" style="left:0;top:0" width="760" height="50" viewBox="0 0 760 50">
<!-- windows logo -->
<g fill="#fff"><path d="M20 17.6L28 16.4V24.3H20Z"/><path d="M29 16.2L40 14.6V24.3H29Z"/><path d="M20 25.3H28V33.2L20 32Z"/><path d="M29 25.3H40V35L29 33.4Z"/></g>
<!-- search -->
<circle cx="92.8" cy="22.2" r="6.8" fill="none" stroke="#fff" stroke-width="1.3"/><path d="M88 27.2L80.3 34.8" stroke="#fff" stroke-width="1.4"/>
<!-- task view -->
<g fill="none" stroke="#fff" stroke-width="1.2"><rect x="140.6" y="21.2" width="11.6" height="6.6"/><path d="M140.6 15V18.4H152.2V15"/><path d="M140.6 33.8V30.4H152.2V33.8"/><path d="M158.5 15V33.8"/></g><rect x="157" y="21.5" width="3" height="2.6" fill="#fff"/>
<!-- file explorer -->
<path d="M200 14.5Q200 13 201.5 13H209.5L212 15.5H200Z" fill="#f5c84a"/><rect x="202.5" y="14" width="5" height="1.2" fill="#fff"/><rect x="200" y="15" width="27.8" height="20" rx="0.8" fill="#ffe79c"/><path d="M205 35.6V26.3Q205 25 206.3 25H221.4Q222.7 25 222.7 26.3V35.6H218V29.8H209.5V35.6Z" fill="#38b6f3"/>
<!-- unikey -->
<g><rect x="261" y="14" width="14.4" height="11.4" rx="1.6" fill="#f4f4f4"/><rect x="276" y="14" width="14.2" height="11.4" rx="1.6" fill="#ececec"/><rect x="268.6" y="25" width="14.4" height="12" rx="1.6" fill="#f6f6f6"/><rect x="262.5" y="24" width="11.5" height="1.6" fill="#cfcfcf"/><rect x="277.5" y="24" width="11.5" height="1.6" fill="#cfcfcf"/><rect x="270" y="35.4" width="11.5" height="1.6" fill="#cfcfcf"/>
<text x="268" y="22.5" font-family="Liberation Sans" font-weight="bold" font-size="9" fill="#e8232d" text-anchor="middle">u</text><text x="283.5" y="22.5" font-family="Liberation Sans" font-weight="bold" font-size="9" fill="#e8232d" text-anchor="middle">i</text><text x="276" y="33.5" font-family="Liberation Sans" font-weight="bold" font-size="9" fill="#e8232d" text-anchor="middle">n</text></g>
<!-- edge -->
<path d="M325.8 24.5C327.5 16.5 333 12 339 12C346 12 350.2 17.5 350.2 25.5V27.8H334.2C334.6 32 338 33.8 342 33.8C345 33.8 347.4 33 349.4 31.8V37C347 38.2 344.4 38.6 341.4 38.6C333.4 38.6 327.6 34.2 328.2 26.2C328.7 21 332.5 17.5 337 16.6C332 17.2 328 20.4 325.8 24.5ZM334.4 23H343.8C343.8 19.6 342 17.4 339.2 17.4C336.6 17.4 334.8 19.6 334.4 23Z" fill="#0b7bd8"/>
<!-- chrome -->
<g transform="translate(399.7 24.7)"><circle r="14" fill="#fbc73a"/><path d="M0 0L-12.12 -7A14 14 0 0 1 12.12 -7Z" fill="#dc4b3e"/><path d="M0 -14A14 14 0 0 1 12.12 -7L0 -7Z" fill="#dc4b3e"/><path d="M-12.12 -7A14 14 0 0 0 0.2 14L6.2 3.6L0 0Z" fill="#1ea05f"/><path d="M-12.12 -7L-6 3.4L0 0Z" fill="#1ea05f"/><path d="M-12.12 -7A14 14 0 0 1 12.12 -7H0Z" fill="#dc4b3e"/><circle r="6.6" fill="#f1f1f1"/><circle r="5.1" fill="#4a8af4"/></g>
<!-- coccoc -->
<g transform="translate(461.5 25)"><circle r="14.7" fill="#eef6ec"/><circle r="13.3" fill="#5db150"/><path d="M0 0L3.1 -14.4A14.7 14.7 0 0 1 14.4 -3.1Z" fill="#f4faf2"/><circle r="6.6" fill="#fff"/><circle r="4.3" fill="#5db150"/><path d="M2.6 -7.4L3.8 -13.4L6.2 -12.8L4.6 -6.6Z" fill="#f0801c"/><path d="M6.4 -4.8L11.2 -9.2L12.6 -7.4L7.6 -3.4Z" fill="#f0801c"/></g>
<!-- devcpp -->
<g><rect x="509" y="10.2" width="29.6" height="29.4" rx="2" fill="#0a1f6a"/><rect x="510" y="11.2" width="27.6" height="13.6" fill="#3146a6"/><rect x="510" y="24.8" width="27.6" height="13.8" fill="#0b5fe6"/><text x="523.8" y="23.4" font-family="Liberation Sans" font-weight="bold" font-size="12" fill="#fff" text-anchor="middle" textLength="25" lengthAdjust="spacingAndGlyphs">DEV</text><text x="524.5" y="36.6" font-family="Liberation Sans" font-weight="bold" font-size="14" fill="#0a2f9a" text-anchor="middle" textLength="27" lengthAdjust="spacingAndGlyphs">C++</text></g>
<!-- perf monitor -->
<g><path d="M572 21L576 18V33L572 31Z" fill="#b9bcc0"/><path d="M577 16.5L598.5 14L599 30L579 33.5Z" fill="#d7dade"/><path d="M579.5 18.5L596.8 16.5L597 28.5L581 31Z" fill="#f7fbff"/><path d="M581 27L584 26.5L585.5 20L587.5 26L590 25.5L592 21.5L593.5 25.5L596 25" fill="none" stroke="#3a8fd0" stroke-width="1"/><ellipse cx="588" cy="36" rx="6.5" ry="2.2" fill="#c8cbce"/><rect x="586" y="32" width="4" height="3.5" fill="#aeb1b4"/></g>
<!-- window app -->
<g><rect x="634" y="13" width="27" height="22" fill="#f4f4f4"/><rect x="634" y="13" width="27" height="2" fill="#dcdcdc"/><rect x="636" y="16.5" width="12" height="16.5" fill="#3f9a86"/><path d="M636 16.5H648V33Z" fill="#5ab08e" opacity="0.6"/><rect x="650" y="16.5" width="6.5" height="16.5" fill="#e2e2e2"/><rect x="658" y="17" width="1.6" height="9" fill="#4a8ac0"/><rect x="658" y="23" width="1.6" height="4" fill="#6ab060"/></g>
<!-- gear -->
<g transform="translate(709.3 24)" fill="#fff"><path id="gt" d="M-2.3 -11.2H2.3L2.8 -7H-2.8Z"/><use href="#gt" transform="rotate(45)"/><use href="#gt" transform="rotate(90)"/><use href="#gt" transform="rotate(135)"/><use href="#gt" transform="rotate(180)"/><use href="#gt" transform="rotate(225)"/><use href="#gt" transform="rotate(270)"/><use href="#gt" transform="rotate(315)"/><path d="M0 -8.6A8.6 8.6 0 1 0 0 8.6A8.6 8.6 0 1 0 0 -8.6ZM0 -4.6A4.6 4.6 0 1 1 0 4.6A4.6 4.6 0 1 1 0 -4.6Z" fill-rule="evenodd"/></g>
</svg>
<svg class="abs" style="left:1600px;top:0" width="320" height="50" viewBox="0 0 320 50">
<g fill="none" stroke="#fff" stroke-width="1.2">
<path d="M12 29L20 21L28 29"/>
<rect x="41.4" y="20.4" width="17.6" height="10.2"/>
<path d="M72.8 31.6A13.6 13.6 0 0 1 86.4 18"/><path d="M76.9 31.6A9.5 9.5 0 0 1 86.4 22.1"/><path d="M81 31.6A5.4 5.4 0 0 1 86.4 26.2"/>
<path d="M100.4 21.8H103.4L106.8 18.4V31.6L103.4 28.2H100.4Z"/>
<path d="M110 22.4A3.6 3.6 0 0 1 110 27.6"/><path d="M113 19.6A7.6 7.6 0 0 1 113 30.4"/><path d="M116 16.8A11.4 11.4 0 0 1 116 33.2"/>
<path d="M270 15.6H288.6V30H282L279.3 33.4L276.6 30H270Z"/>
</g>
<rect x="43" y="22" width="10.3" height="7" fill="#fff"/><rect x="59.4" y="23.6" width="1" height="3.8" fill="#fff"/>
<circle cx="86.2" cy="31.3" r="1.5" fill="#fff"/>
<rect x="315" y="0" width="1" height="50" fill="#4a4a4a"/>
</svg>
<div class="t" style="left:1733.2px;top:17.8px;letter-spacing:-1.2px">ENG</div>
<div class="t" style="left:1786px;top:6px;letter-spacing:-0.7px">8:42 PM</div>
<div class="t" style="left:1782.5px;top:28.5px;letter-spacing:0.05px">5/2/2019</div>
</div>
</body>
</html>
